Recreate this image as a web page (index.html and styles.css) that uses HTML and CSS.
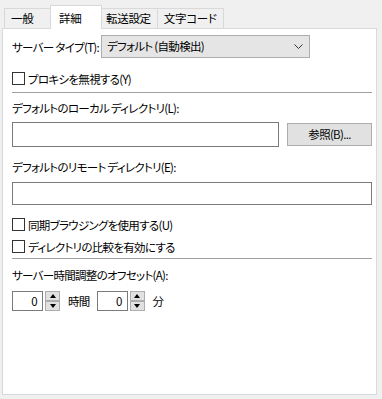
FILE: index.html
```html
<!DOCTYPE html>
<html>
<head>
  <meta charset="UTF-8">
  <title>詳細</title>
  <link rel="stylesheet" href="styles.css">
</head>
<body>
  <div class="dialog">
    <div class="tabs">
      <div class="tab">一般</div>
      <div class="tab active">詳細</div>
      <div class="tab">転送設定</div>
      <div class="tab">文字コード</div>
    </div>

    <div class="panel">
      <div class="server-row">
        <span class="field-label">サーバー タイプ(T):</span>
        <div class="combo">
          <span>デフォルト (自動検出)</span>
          <svg class="chevron" width="9" height="5" viewBox="0 0 9 5">
            <path d="M0.5 0.5 L4.5 4.5 L8.5 0.5" fill="none" stroke="#333" stroke-width="1"/>
          </svg>
        </div>
      </div>

      <label class="check proxy-check"><span class="box"></span>プロキシを無視する(Y)</label>

      <div class="sep sep-top"></div>

      <div class="label local-label">デフォルトのローカル ディレクトリ(L):</div>
      <div class="local-row">
        <div class="textbox local-box"></div>
        <button class="browse">参照(B)...</button>
      </div>

      <div class="label remote-label">デフォルトのリモート ディレクトリ(E):</div>
      <div class="textbox remote-box"></div>

      <label class="check sync-check"><span class="box"></span>同期ブラウジングを使用する(U)</label>
      <label class="check compare-check"><span class="box"></span>ディレクトリの比較を有効にする</label>

      <div class="sep sep-bottom"></div>

      <div class="label offset-label">サーバー時間調整のオフセット(A):</div>
      <div class="offset-row">
        <div class="spin-input">0</div>
        <div class="spin">
          <span class="spin-btn"><span class="arrow up"></span></span>
          <span class="spin-btn"><span class="arrow down"></span></span>
        </div>
        <span class="unit hours">時間</span>
        <div class="spin-input">0</div>
        <div class="spin">
          <span class="spin-btn"><span class="arrow up"></span></span>
          <span class="spin-btn"><span class="arrow down"></span></span>
        </div>
        <span class="unit">分</span>
      </div>
    </div>
  </div>
</body>
</html>
```

FILE: styles.css
```css
body {
  margin: 0;
  background-color: #f0f0f0;
  font-family: "Noto Sans CJK JP", "Noto Sans", sans-serif;
  font-size: 11.5px;
  letter-spacing: -0.7px;
  font-feature-settings: "palt";
  color: #000;
}

.dialog {
  padding: 6px 5px 4px 2px;
}

.tabs {
  display: flex;
  align-items: flex-end;
  height: 22px;
  padding-left: 2px;
}

.tab {
  height: 19px;
  line-height: 18px;
  padding: 0 6px;
  min-width: 34px;
  border: 1px solid #d9d9d9;
  border-bottom: none;
  border-left: none;
  background: #f0f0f0;
  white-space: nowrap;
  letter-spacing: -0.3px;
}

.tab:first-child {
  border-left: 1px solid #d9d9d9;
}

.tab.active {
  position: relative;
  z-index: 1;
  height: 23px;
  line-height: 24px;
  margin: 0 -2px -1px -2px;
  padding: 0 8px 0 8px;
  background: #fff;
  border-left: 1px solid #d9d9d9;
}

.panel {
  height: 359px;
  background: #fff;
  border: 1px solid #d9d9d9;
  padding: 6px 4px 0 9px;
  display: flex;
  flex-direction: column;
}

.server-row {
  display: flex;
  align-items: center;
  height: 23px;
}

.field-label {
  width: 89px;
  white-space: nowrap;
}

.combo {
  box-sizing: border-box;
  width: 209px;
  height: 23px;
  display: flex;
  align-items: center;
  justify-content: space-between;
  padding: 0 5px 1px 5px;
  background: #e5e5e5;
  border: 1px solid #adadad;
}

.chevron {
  margin-right: 1px;
}

.check {
  display: flex;
  align-items: center;
  height: 21px;
}

.box {
  box-sizing: border-box;
  width: 13px;
  height: 13px;
  border: 1px solid #333;
  background: #fff;
  margin-right: 3px;
}

.proxy-check { margin-top: 10px; }
.sync-check { margin-top: 9px; }
.compare-check { margin-top: 1px; }

.sep {
  height: 1px;
  background: #a0a0a0;
}

.sep-top { margin-top: 3px; }
.sep-bottom { margin-top: 1px; }

.label {
  height: 16px;
  line-height: 16px;
  white-space: nowrap;
}

.local-label { margin-top: 7px; }
.remote-label { margin-top: 12px; }
.offset-label { margin-top: 8px; }

.local-row {
  display: flex;
  align-items: flex-start;
  margin-top: 6px;
}

.textbox {
  box-sizing: border-box;
  border: 1px solid #7a7a7a;
  background: #fff;
}

.local-box {
  width: 267px;
  height: 25px;
}

.remote-box {
  margin-top: 7px;
  height: 23px;
}

.browse {
  box-sizing: border-box;
  width: 85px;
  height: 23px;
  margin: 1px 0 0 8px;
  padding: 0 0 1px 0;
  background: #e1e1e1;
  border: 1px solid #adadad;
  font: inherit;
  letter-spacing: inherit;
  font-feature-settings: "palt";
  color: #000;
}

.offset-row {
  display: flex;
  align-items: center;
  height: 20px;
  margin-top: 8px;
}

.spin-input {
  box-sizing: border-box;
  width: 31px;
  height: 20px;
  line-height: 18px;
  border: 1px solid #7a7a7a;
  text-align: right;
  padding-right: 5px;
}

.spin {
  display: flex;
  flex-direction: column;
  margin-left: 2px;
}

.spin-btn {
  box-sizing: border-box;
  width: 15px;
  height: 10px;
  background: #e1e1e1;
  border: 1px solid #adadad;
  display: flex;
  align-items: center;
  justify-content: center;
}

.arrow {
  width: 0;
  height: 0;
  border-left: 3.5px solid transparent;
  border-right: 3.5px solid transparent;
}

.arrow.up { border-bottom: 4px solid #000; }
.arrow.down { border-top: 4px solid #000; }

.unit {
  margin-left: 8px;
}

.unit.hours {
  margin-right: 7px;
}
```
